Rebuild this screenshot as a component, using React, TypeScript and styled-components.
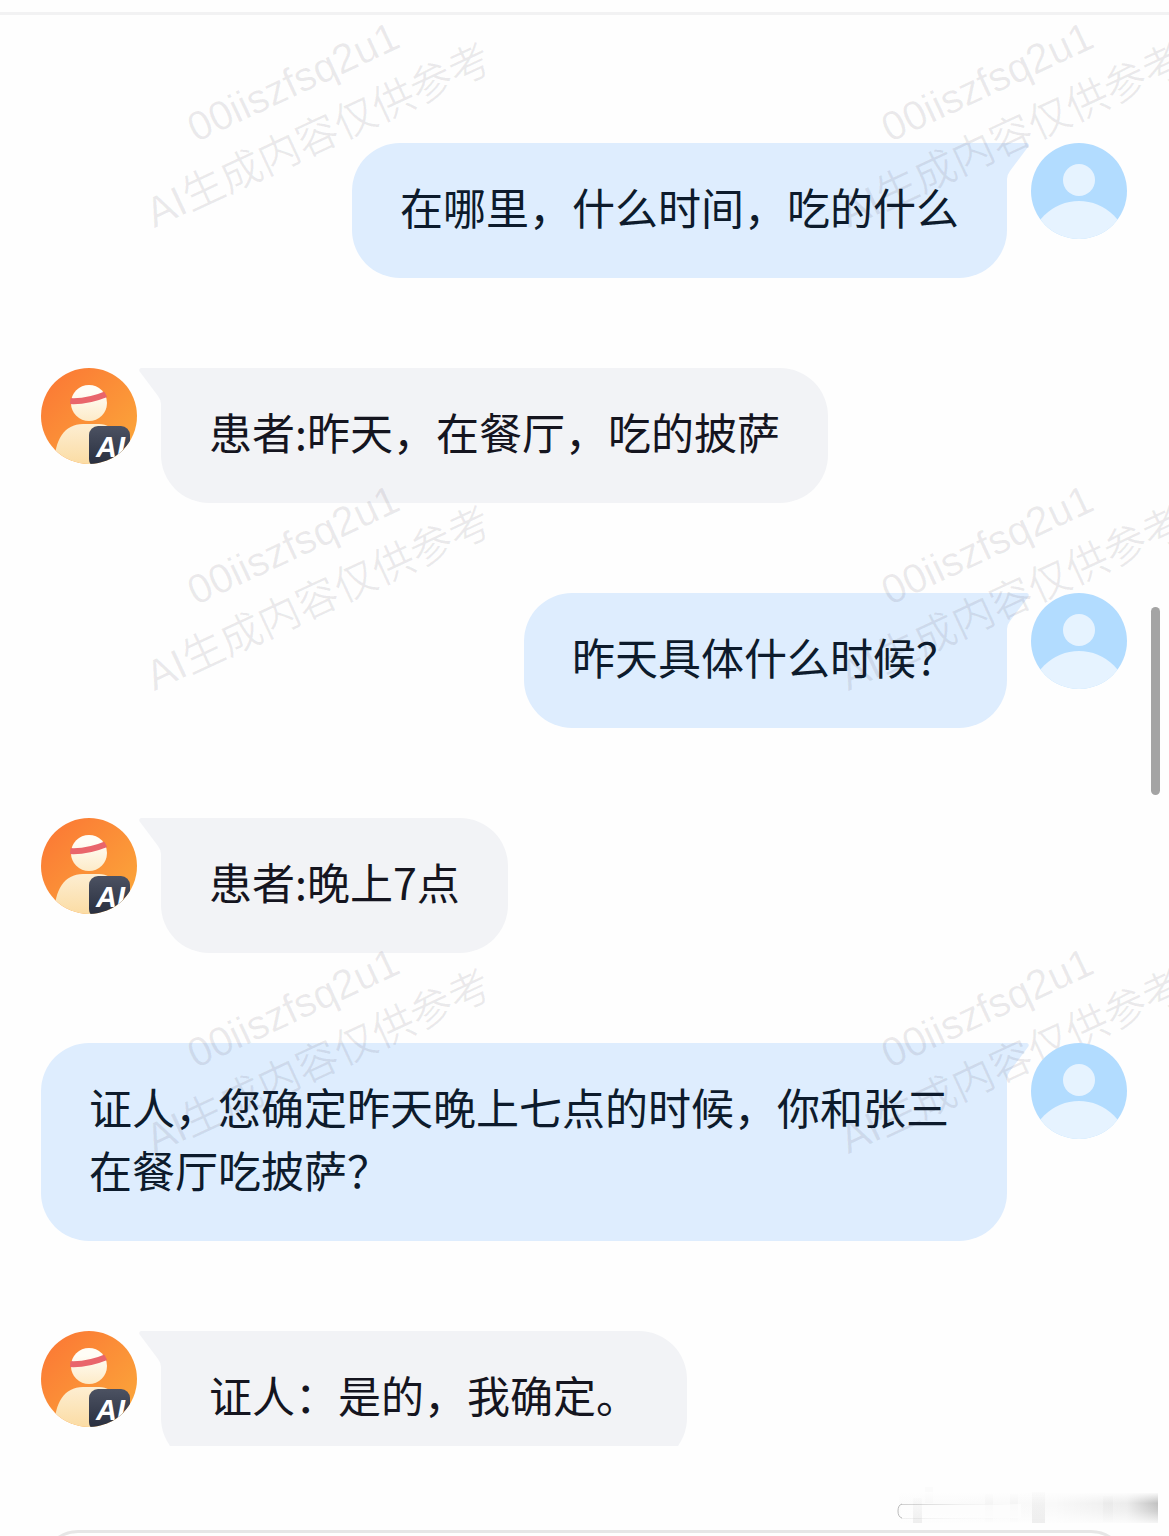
import React from "react";
import styled, { createGlobalStyle, css } from "styled-components";

const GlobalStyle = createGlobalStyle`
  * { box-sizing: border-box; }
  html, body { margin: 0; padding: 0; background: #fefefe; }
  body {
    font-family: "Noto Sans CJK SC", "Liberation Sans", sans-serif;
    color: #10182a;
  }
`;

const Page = styled.div`
  position: relative;
  display: flex;
  flex-direction: column;
  height: 100vh;
  overflow: hidden;
  background: #fefefe;
`;

const TopBar = styled.header`
  flex: none;
  height: 15px;
  border-bottom: 3px solid #f2f2f3;
`;

const Conversation = styled.main`
  position: relative;
  flex: 1;
  min-height: 0;
  overflow: hidden;
`;

const MessageList = styled.ol`
  display: flex;
  flex-direction: column;
  gap: 90px;
  margin: 0;
  padding: 128px 42px 0 41px;
  list-style: none;
`;

const Row = styled.li<{ $mine: boolean }>`
  display: flex;
  flex-direction: ${(p) => (p.$mine ? "row-reverse" : "row")};
  align-items: flex-start;
  gap: 24px;
`;

const AvatarSvg = styled.svg`
  position: relative;
  z-index: 2;
  flex: none;
  display: block;
  width: 96px;
  height: 96px;
`;

const Bubble = styled.p<{ $mine: boolean }>`
  position: relative;
  margin: 0;
  padding: 32px 48px 40px;
  font-size: 43px;
  line-height: 63px;
  border-radius: 48px;
  ${(p) =>
    p.$mine
      ? css`
          background: #deedfe;
          color: #0d1b2c;
          border-top-right-radius: 0;
        `
      : css`
          background: #f2f3f6;
          color: #15151f;
          border-top-left-radius: 0;
        `}
`;

const Tail = styled.svg<{ $mine: boolean }>`
  position: absolute;
  top: 0;
  width: 22px;
  height: 36px;
  ${(p) =>
    p.$mine
      ? css`
          right: -22px;
          fill: #deedfe;
        `
      : css`
          left: -22px;
          fill: #f2f3f6;
          transform: scaleX(-1);
        `}
`;

const WatermarkLayer = styled.div`
  position: absolute;
  z-index: 1;
  top: -26px;
  left: -41px;
  display: grid;
  grid-template-columns: repeat(2, 694px);
  grid-template-rows: repeat(3, 463px);
  pointer-events: none;
  user-select: none;
`;

const Watermark = styled.div`
  display: flex;
  justify-content: center;
  height: 240px;
  align-items: center;
  font-family: "Liberation Sans", "Noto Sans CJK SC", sans-serif;
  font-weight: 350;
  font-size: 42px;
  line-height: 60px;
  text-align: center;
  white-space: nowrap;
  color: rgba(50, 30, 60, 0.09);
`;

const Slanted = styled.div`
  transform: rotate(-25deg);
`;

const AccountCode = styled.div`
  font-size: 41px;
`;

const ScrollThumb = styled.div`
  position: absolute;
  top: 592px;
  right: 9px;
  width: 9px;
  height: 188px;
  border-radius: 5px;
  background: #a4a4a4;
`;

const Footer = styled.footer`
  position: relative;
  flex: none;
  height: 90px;
  padding: 84px 42px 0;
  overflow: hidden;
`;

const Composer = styled.input`
  display: block;
  width: 100%;
  height: 96px;
  padding: 0 36px;
  border: 3px solid #e6e6e6;
  border-radius: 36px;
  background: #fefefe;
  outline: none;
  font: inherit;
`;

const Smudge = styled.svg`
  position: absolute;
  right: 10px;
  top: 40px;
  width: 262px;
  height: 44px;
`;

function UserAvatar() {
  return (
    <AvatarSvg viewBox="0 0 96 96" aria-hidden="true">
      <defs>
        <clipPath id="user-clip">
          <circle cx="48" cy="48" r="48" />
        </clipPath>
      </defs>
      <g clipPath="url(#user-clip)">
        <rect width="96" height="96" fill="#b2dcff" />
        <circle cx="48" cy="37" r="16" fill="#e6f3ff" />
        <circle cx="48" cy="107" r="49" fill="#e6f3ff" />
      </g>
    </AvatarSvg>
  );
}

function PatientAvatar({ id }: { id: string }) {
  return (
    <AvatarSvg viewBox="0 0 96 96" aria-hidden="true">
      <defs>
        <clipPath id={`${id}-clip`}>
          <circle cx="48" cy="48" r="48" />
        </clipPath>
        <clipPath id={`${id}-head`}>
          <circle cx="48" cy="35" r="19" />
        </clipPath>
        <linearGradient id={`${id}-bg`} x1="0" y1="0" x2="1" y2="1">
          <stop offset="0.1" stopColor="#fb7a35" />
          <stop offset="0.9" stopColor="#fba63a" />
        </linearGradient>
        <linearGradient id={`${id}-skin`} x1="0" y1="0" x2="0" y2="1">
          <stop offset="0.2" stopColor="#fffdf6" />
          <stop offset="1" stopColor="#fdebc8" />
        </linearGradient>
        <linearGradient id={`${id}-body`} x1="0" y1="0" x2="0" y2="1">
          <stop offset="0" stopColor="#fdeed2" />
          <stop offset="1" stopColor="#fbdca4" />
        </linearGradient>
        <linearGradient id={`${id}-badge`} x1="0" y1="0" x2="0" y2="1">
          <stop offset="0" stopColor="#4c5262" />
          <stop offset="1" stopColor="#262c3c" />
        </linearGradient>
      </defs>
      <g clipPath={`url(#${id}-clip)`}>
        <rect width="96" height="96" fill={`url(#${id}-bg)`} />
        <path
          d="M13 96C14 72 23 56 42 56H58C74 56 82 72 83 96Z"
          fill={`url(#${id}-body)`}
        />
        <circle cx="48" cy="35" r="18" fill={`url(#${id}-skin)`} />
        <path
          d="M28 33C42 34 54 31 68 25"
          fill="none"
          stroke="#e9656b"
          strokeWidth="6"
          clipPath={`url(#${id}-head)`}
        />
        <rect x="48" y="58" width="41" height="42" rx="9" fill={`url(#${id}-badge)`} />
        <text
          x="55"
          y="89"
          fill="#fff"
          fontFamily="Liberation Sans, sans-serif"
          fontSize="29"
          fontWeight="700"
          fontStyle="italic"
        >
          AI
        </text>
      </g>
    </AvatarSvg>
  );
}

type Message = { mine: boolean; text: string };

const messages: Message[] = [
  { mine: true, text: "在哪里，什么时间，吃的什么" },
  { mine: false, text: "患者:昨天，在餐厅，吃的披萨" },
  { mine: true, text: "昨天具体什么时候？" },
  { mine: false, text: "患者:晚上7点" },
  { mine: true, text: "证人，您确定昨天晚上七点的时候，你和张三在餐厅吃披萨？" },
  { mine: false, text: "证人：是的，我确定。" },
];

export default function App() {
  return (
    <Page lang="zh-CN">
      <GlobalStyle />
      <TopBar />
      <Conversation>
        <MessageList>
          {messages.map((m, i) => (
            <Row key={i} $mine={m.mine}>
              {m.mine ? <UserAvatar /> : <PatientAvatar id={`patient-${i}`} />}
              <Bubble $mine={m.mine}>
                <Tail $mine={m.mine} viewBox="0 0 22 36" aria-hidden="true">
                  <path d="M0 0H20Q23 1 21 4L3 28Q0 32 0 36Z" />
                </Tail>
                {m.text}
              </Bubble>
            </Row>
          ))}
        </MessageList>
        <WatermarkLayer aria-hidden="true">
          {Array.from({ length: 6 }, (_, i) => (
            <Watermark key={i}>
              <Slanted>
                <AccountCode>00iiszfsq2u1</AccountCode>
                <div>AI生成内容仅供参考</div>
              </Slanted>
            </Watermark>
          ))}
        </WatermarkLayer>
        <ScrollThumb />
      </Conversation>
      <Footer>
        <Composer type="text" aria-label="输入消息" />
        <Smudge viewBox="0 0 262 44" aria-hidden="true">
          <defs>
            <linearGradient id="smudge-x" x1="0" y1="0" x2="1" y2="0">
              <stop offset="0" stopColor="#000" stopOpacity="0.01" />
              <stop offset="0.6" stopColor="#000" stopOpacity="0.02" />
              <stop offset="0.88" stopColor="#000" stopOpacity="0.07" />
              <stop offset="1" stopColor="#000" stopOpacity="0.24" />
            </linearGradient>
            <linearGradient id="smudge-fade" x1="0" y1="0" x2="0" y2="1">
              <stop offset="0" stopColor="#fefefe" stopOpacity="1" />
              <stop offset="0.35" stopColor="#fefefe" stopOpacity="0" />
              <stop offset="0.6" stopColor="#fefefe" stopOpacity="0.2" />
              <stop offset="1" stopColor="#fefefe" stopOpacity="0.9" />
            </linearGradient>
            <linearGradient id="smudge-line" x1="0" y1="0" x2="1" y2="0">
              <stop offset="0" stopColor="#000" stopOpacity="0.18" />
              <stop offset="0.5" stopColor="#000" stopOpacity="0.05" />
              <stop offset="1" stopColor="#000" stopOpacity="0" />
            </linearGradient>
            <linearGradient id="smudge-bar" x1="0" y1="0" x2="0" y2="1">
              <stop offset="0" stopColor="#000" stopOpacity="0.01" />
              <stop offset="1" stopColor="#000" stopOpacity="0.06" />
            </linearGradient>
          </defs>
          <rect x="2" y="7" width="259" height="30" fill="url(#smudge-x)" />
          <rect x="28" y="1" width="8" height="16" fill="#000" opacity="0.01" />
          <rect x="88" y="8" width="8" height="28" fill="#000" opacity="0.02" />
          <rect x="113" y="8" width="8" height="28" fill="#000" opacity="0.02" />
          <rect x="206" y="10" width="10" height="26" fill="#000" opacity="0.02" />
          <rect x="0" y="6" width="262" height="32" fill="url(#smudge-fade)" />
          <rect x="4" y="18" width="120" height="14" fill="#fefefe" opacity="0.7" />
          <rect x="16" y="12" width="9" height="25" fill="url(#smudge-bar)" />
          <rect x="135" y="6" width="13" height="31" fill="url(#smudge-bar)" />
          <rect x="4" y="18" width="120" height="1" fill="url(#smudge-line)" />
          <rect x="4" y="32" width="120" height="1" fill="url(#smudge-line)" opacity="0.3" />
          <path d="M5 18Q1 19 1 25Q1 31 5 32" fill="none" stroke="#bbb" strokeWidth="1" />
        </Smudge>
      </Footer>
    </Page>
  );
}
